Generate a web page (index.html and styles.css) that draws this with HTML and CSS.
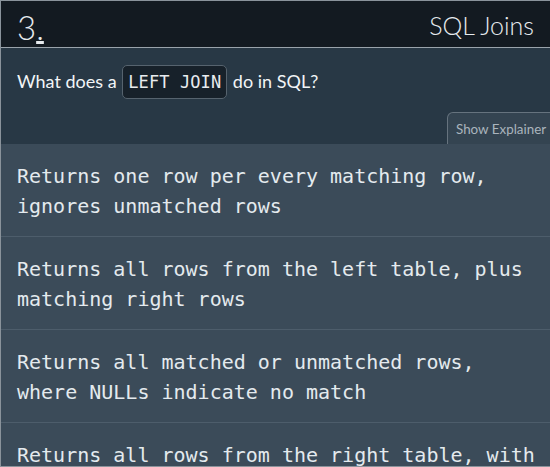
FILE: index.html
```html
<!DOCTYPE html>
<html>
<head>
<meta charset="utf-8">
<link rel="stylesheet" href="styles.css">
</head>
<body>
<div class="card">
  <header class="head">
    <span class="num">3<span class="dot">.</span></span>
    <span class="topic">SQL Joins</span>
  </header>
  <section class="question">
    <p class="q">What does a <code class="code">LEFT JOIN</code> do in SQL?</p>
    <div class="tabrow"><button class="tab">Show Explainer</button></div>
  </section>
  <ul class="options">
    <li class="opt">Returns one row per every matching row, ignores unmatched rows</li>
    <li class="opt">Returns all rows from the left table, plus matching right rows</li>
    <li class="opt">Returns all matched or unmatched rows, where NULLs indicate no match</li>
    <li class="opt">Returns all rows from the right table, with matching left rows</li>
  </ul>
</div>
</body>
</html>
```
FILE: styles.css
```css
html, body { margin: 0; padding: 0; background: #3b4b59; overflow: hidden; }
.card {
  width: 560px;
  height: 465px;
  border: 1px solid #8a939b;
  border-right: none;
  overflow: hidden;
  font-family: "Lato", "Open Sans", sans-serif;
  background: #3b4b59;
}
.head {
  height: 46px;
  background: #131a21;
  border-bottom: 1px solid #9aa3ab;
  display: flex;
  align-items: center;
  justify-content: space-between;
  padding: 0 16px 0 16px;
  width: 517px;
  color: #e6eaee;
}
.num { font-size: 33px; font-weight: 300; padding-top: 6px; }
.dot { text-decoration: underline; text-underline-offset: 1px; }
.topic { font-size: 25px; font-weight: 300; padding-top: 2px; }
.question {
  background: #283845;
  height: 96px;
  display: flex;
  flex-direction: column;
  justify-content: space-between;
}
.q {
  margin: 16px 0 0 16px;
  color: #f2f5f7;
  font-family: "Lato", sans-serif;
  font-size: 18px;
  line-height: 34px;
}
.code {
  display: inline-block;
  font-family: "DejaVu Sans Mono", monospace;
  font-size: 17px;
  line-height: 20px;
  padding: 6px 5px;
  margin: 0 1px;
  background: #17212a;
  border: 1px solid #56636e;
  border-radius: 5px;
  color: #e8ecef;
  letter-spacing: 0.1px;
}
.tabrow { display: flex; justify-content: flex-start; padding-left: 446px; }
.tab {
  font-family: "Lato", sans-serif;
  font-size: 13.4px;
  color: #aab4bd;
  background: #344451;
  border: 1px solid #66737e;
  border-bottom: none;
  border-radius: 6px 0 0 0;
  height: 32px;
  padding: 0 8px;
  white-space: nowrap;
}
.options { list-style: none; margin: 0; padding: 0; }
.opt {
  font-family: "DejaVu Sans Mono", monospace;
  font-size: 20px;
  line-height: 30px;
  color: #e4eaee;
  padding: 17px 16px 15px 16px;
  width: 518px;
  border-bottom: 1px solid #4d5d6b;
}
```
